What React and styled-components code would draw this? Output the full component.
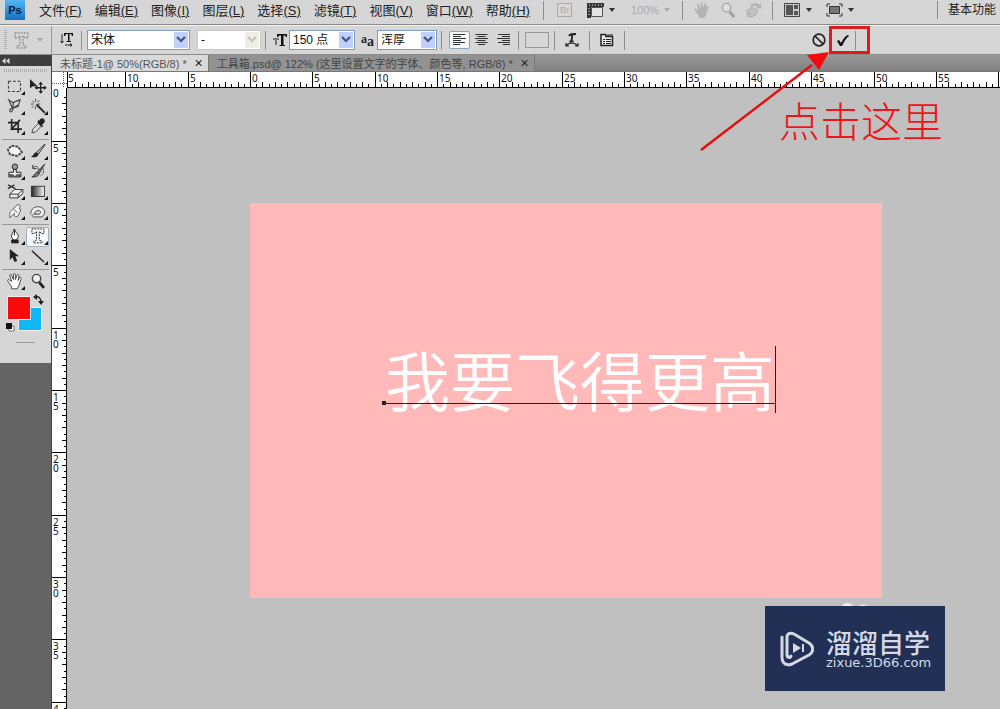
import React, { useEffect, useState } from 'react';
import styled, { createGlobalStyle, css } from 'styled-components';

const MENUS = [
  ['文件', 'F'],
  ['编辑', 'E'],
  ['图像', 'I'],
  ['图层', 'L'],
  ['选择', 'S'],
  ['滤镜', 'T'],
  ['视图', 'V'],
  ['窗口', 'W'],
  ['帮助', 'H'],
];

// pixels for five units of the ruler
const STEP = 62.35;

const ICONS = {
  marquee: <rect x="1.5" y="3.5" width="13" height="11" fill="none" stroke="#222" strokeDasharray="3 2" />,
  move: (
    <>
      <path d="M0 1v10l3-2 5 0z" fill="#222" />
      <path d="M11.5 5v11M6 10.500h11" stroke="#222" strokeWidth="1.400" />
      <path d="M9 7l2.500-3L14 7zM9 14l2.500 3 2.500-3zM8 8l-3 2.500L8 13zM15 8l3 2.500-3 2.500z" fill="#222" />
    </>
  ),
  lasso: <path d="M2 2l4 3 8-3-2 7-6 2-2-4zM6 11c-4 0-3 4-2 4s3-2 2-4M7 5l-1 6 7-4" fill="#ddd" stroke="#444" strokeWidth="1.300" />,
  wand: (
    <>
      <path d="M7 7l9 9" stroke="#222" strokeWidth="2" />
      <path d="M6 1v3M6 9v3M1 6.5h3M8 6.500h3M2.500 3l2 2M10 2.500l-2 2M2 10.500l2-2" stroke="#444" />
    </>
  ),
  crop: <path d="M5 1v11h11M1 5h11v11M4 13l10-11" fill="none" stroke="#222" strokeWidth="1.700" />,
  dropper: (
    <>
      <path d="M2 16l1-4 6-6 3 3-6 6z" fill="#ddd" stroke="#444" />
      <path d="M8 5l5 5 1-1-1-2c4-2 3-5 2-6s-4-1-5 2l-1-1z" fill="#222" />
    </>
  ),
  patch: <path d="M5 3l7 1 4 6-5 4-8-2-2-5z" fill="#f4f4f4" stroke="#444" strokeWidth="2" strokeDasharray="3 1" />,
  brush: (
    <>
      <path d="M16 1L7 10l2 2 7-10z" fill="#bbb" stroke="#333" />
      <path d="M7 10c-3 0-3 4-6 5 4 1 8 0 8-3z" fill="#222" />
    </>
  ),
  stamp: (
    <>
      <circle cx="8.500" cy="4" r="3" fill="#999" stroke="#222" />
      <path d="M7 7h3v3h5v5H2v-5h5z" fill="#eee" stroke="#222" />
      <path d="M2 12h13v3H2z" fill="#555" />
      <path d="M6 12h5l-2.500 2z" fill="#fff" />
    </>
  ),
  history: (
    <>
      <path d="M16 1L8 9l2 2zM8 10c-3 0-3 4-6 5 4 0 7 0 8-4z" fill="#777" stroke="#333" />
      <path d="M3 5c3-2 5-2 6 2M3 2v4h4" fill="none" stroke="#333" />
      <path d="M14 6c1 3 1 6-3 8" fill="none" stroke="#333" strokeDasharray="2 1" />
    </>
  ),
  eraser: (
    <>
      <path d="M3 12l5-5h9l-5 5zM3 12v4h9v-4M12 16l5-5V7" fill="#eee" stroke="#333" />
      <path d="M1 2l8 4M1 6l7-4" stroke="#333" strokeWidth="1.500" fill="none" />
    </>
  ),
  gradient: (
    <>
      <defs>
        <linearGradient id="tool-gradient">
          <stop offset="0" stopColor="#222" />
          <stop offset="1" stopColor="#fff" />
        </linearGradient>
      </defs>
      <rect x="1.500" y="3.500" width="14" height="11" fill="url(#tool-gradient)" stroke="#333" />
    </>
  ),
  smudge: <path d="M3 16c0-4-1-6 3-9l5-5c3-1 4 1 2 4l2 1-3 7c-3 2-5 0-4-3M3 16l5-5M7 7l4 3" fill="#f4f4f4" stroke="#555" />,
  sponge: <path d="M1 12c-1-4 3-8 7-8 5 0 8 3 8 7l-3 4H4c-3-1-1-3 0-3h6c2-1 2-4-1-4-3 0-5 3-3 4" fill="#eee" stroke="#444" />,
  pen: (
    <>
      <path d="M8 1c-1 4-4 6-3 9l2 3h3l2-3c1-3-3-5-4-9z" fill="#fff" stroke="#222" />
      <path d="M8 2v6M5 13h7v3H5z" fill="#222" stroke="#222" />
    </>
  ),
  text: <path d="M2 1h13v5h-3l-1-2h-1v9l3 1v2H4v-2l3-1V4H6L5 6H2z" fill="none" stroke="#222" strokeDasharray="2 1" />,
  path: <path d="M3 1v12l3-3 2 5 3-1-2-5h4z" fill="#222" />,
  line: <path d="M2 3l13 12" stroke="#222" strokeWidth="1.500" />,
  hand: <path d="M5 15L1 9c-1-2 1-3 2-1l2 1-2-6c0-2 2-2 2 0l2 4V2c0-2 2-2 2 0v5l2-5c1-1 2 0 2 1l-1 5 1-3c1-1 3 0 2 2l-2 6-2 4H5z" fill="#fff" stroke="#444" />,
  zoom: (
    <>
      <path d="M10 10l5 6" stroke="#222" strokeWidth="3" />
      <circle cx="7" cy="6" r="4.500" fill="#eee" stroke="#444" strokeWidth="1.500" />
    </>
  ),
};

const TOOL_GROUPS = [
  [
    ['marquee', '矩形选框工具'],
    ['move', '移动工具', true],
    ['lasso', '套索工具'],
    ['wand', '魔棒工具'],
    ['crop', '裁剪工具'],
    ['dropper', '吸管工具'],
  ],
  [
    ['patch', '修补工具'],
    ['brush', '画笔工具'],
    ['stamp', '仿制图章工具'],
    ['history', '历史记录画笔工具'],
    ['eraser', '橡皮擦工具'],
    ['gradient', '渐变工具'],
    ['smudge', '涂抹工具'],
    ['sponge', '海绵工具'],
  ],
  [
    ['pen', '钢笔工具'],
    ['text', '文字工具'],
    ['path', '路径选择工具'],
    ['line', '直线工具'],
  ],
  [
    ['hand', '抓手工具'],
    ['zoom', '缩放工具', true],
  ],
];

const useWindowSize = () => {
  const [size, setSize] = useState([window.innerWidth, window.innerHeight]);

  useEffect(() => {
    const update = () => setSize([window.innerWidth, window.innerHeight]);
    window.addEventListener('resize', update);
    return () => window.removeEventListener('resize', update);
  }, []);

  return size;
};

const getTicks = (zero, start, end) => {
  const ticks = [];
  for (let i = Math.ceil(((start - zero) * 10) / STEP); ; i++) {
    const at = Math.round(zero + (i * STEP) / 10) + 0.5;
    if (at > end) return ticks;
    ticks.push({ i, at, major: i % 10 === 0, label: String(Math.abs(i / 2)) });
  }
};

const Tool = ({ name, label, plain, active, onClick }) => (
  <ToolButton type="button" aria-label={label} $active={active} onClick={onClick}>
    <svg width="20" height="18" viewBox="-2 0 20 18">
      <g transform="scale(0.930)">{ICONS[name]}</g>
      {!plain && <path d="M18 13v4h-4z" fill="#111" />}
    </svg>
  </ToolButton>
);

const HorizontalRuler = () => {
  const [width] = useWindowSize();

  return (
    <TopRuler aria-hidden="true">
      <path d="M0 11.500h15M11.500 0v15" stroke="#555" strokeDasharray="1 1" />
      {getTicks(198, 18, width - 52).map(({ i, at, major, label }) => (
        <g key={i}>
          <path d={`M${at} ${major ? 0 : i % 2 ? 12 : 10}V16`} stroke="#000" />
          {major && at + 16 < width - 52 && (
            <text x={at + 1.5} y="10">
              {label}
            </text>
          )}
        </g>
      ))}
      <text x="16" y="10">5</text>
      <path d="M15.500 0V16M15 15.500H4000" stroke="#000" />
    </TopRuler>
  );
};

const VerticalRuler = () => {
  const [, height] = useWindowSize();

  return (
    <SideRuler aria-hidden="true">
      {getTicks(115, 3, height - 88).map(({ i, at, major, label }) => (
        <g key={i}>
          <path d={`M${major ? 0 : i % 2 ? 12 : 10} ${at}H15`} stroke="#000" />
          {major &&
            label.split('').map((digit, n) => (
              <text key={n} x="1" y={at + 10 + n * 9}>
                {at + 10 + n * 9 < height - 84 ? digit : ''}
              </text>
            ))}
        </g>
      ))}
      <text x="1" y="9">0</text>
      <path d="M14.500 0V4000" stroke="#000" />
    </SideRuler>
  );
};

const Picker = ({ label, options, width, disabled }) => (
  <SelectBox $width={width} $disabled={disabled}>
    <select aria-label={label} disabled={disabled}>
      {options.map((option) => (
        <option key={option}>{option}</option>
      ))}
    </select>
    <SelectArrow $disabled={disabled}>
      <svg width="10" height="8" viewBox="0 0 10 8">
        <path d="M1 1l4 4 4-4" fill="none" stroke="currentColor" strokeWidth="2.200" />
      </svg>
    </SelectArrow>
  </SelectBox>
);

const Caret = ({ muted }) => (
  <svg width="8" height="6" viewBox="0 0 8 6" aria-hidden="true">
    <path d="M1 1h6L4 5z" fill={muted ? '#aaa' : '#333'} />
  </svg>
);

const AlignIcon = ({ align }) => (
  <svg width="14" height="14" viewBox="0 0 14 14">
    {[12, 8, 13, 8, 12, 7].map((w, i) => {
      const x = align === 'left' ? 0 : align === 'right' ? 13 - w : (13 - w) / 2;
      return <path key={i} d={`M${x} ${i * 2 + 1.5}h${w}`} stroke="#333" />;
    })}
  </svg>
);

const MenuBar = () => (
  <Menus>
    <Logo>Ps</Logo>
    <MenuList>
      {MENUS.map(([name, key]) => (
        <MenuItem type="button" key={key}>
          {name}
          <u>({key})</u>
        </MenuItem>
      ))}
    </MenuList>
    <Divider />
    <AppTools>
      <BridgeButton type="button">Br</BridgeButton>
      <PlainButton type="button" aria-label="查看额外内容">
        <svg width="17" height="15" viewBox="0 0 17 15">
          <path d="M0 0h17v4H4v11H0z" fill="#333" />
          <path d="M4.500 4.500h11v9h-11z" fill="#e4e4e4" stroke="#555" />
          <path d="M2 2h14M2 5v9" stroke="#fff" strokeDasharray="1 2" />
        </svg>
        <Caret />
      </PlainButton>
      <PlainButton type="button" disabled>
        100% <Caret muted />
      </PlainButton>
    </AppTools>
    <Divider />
    <ViewTools>
      <FadedButton type="button" aria-label="抓手">
        <svg width="16" height="16" viewBox="0 0 17 17">
          <path
            d="M5 15L1 9c-1-2 1-3 2-1l2 1-2-6c0-2 2-2 2 0l2 4V2c0-2 2-2 2 0v5l2-5c1-1 2 0 2 1l-1 5 1-3c1-1 3 0 2 2l-2 6-2 4H5z"
            fill="#666"
          />
        </svg>
      </FadedButton>
      <FadedButton type="button" aria-label="缩放">
        <svg width="16" height="16" viewBox="0 0 17 17">{ICONS.zoom}</svg>
      </FadedButton>
      <FadedButton type="button" aria-label="旋转视图">
        <svg width="16" height="16" viewBox="0 0 17 17">
          <path d="M4 5c2-4 7-5 10-2l2-2v6h-6l2-2c-3-2-5-1-6 1z" fill="#666" />
          <path d="M1 9l6-3 5 3-2 5-5 2-4-1 4-3-4 1z" fill="#999" stroke="#444" />
        </svg>
      </FadedButton>
    </ViewTools>
    <Divider />
    <ViewTools>
      <PlainButton type="button" aria-label="排列文档">
        <svg width="17" height="14" viewBox="0 0 17 14">
          <path d="M.5.5h15v13H.5z" fill="#ccc" stroke="#444" />
          <path d="M2 2h7v10H2zM10 2h4v4h-4zM10 8h4v4h-4z" fill="#555" />
        </svg>
        <Caret />
      </PlainButton>
      <PlainButton type="button" aria-label="屏幕模式">
        <svg width="17" height="14" viewBox="0 0 17 14">
          <path d="M1 4V1h3M13 1h3v3M16 10v3h-3M4 13H1v-3" fill="none" stroke="#333" />
          <path d="M3.500 3.500h10v7h-10z" fill="#777" stroke="#333" />
        </svg>
        <Caret />
      </PlainButton>
    </ViewTools>
    <Workspace type="button">基本功能</Workspace>
  </Menus>
);

const OptionsBar = () => {
  const [align, setAlign] = useState('left');

  return (
    <Options>
      <Preset type="button" aria-label="工具预设">
        <Grip />
        <svg width="17" height="17" viewBox="0 0 17 17">
          <g opacity="0.500">{ICONS.text}</g>
        </svg>
        <Caret muted />
      </Preset>
      <Orientation type="button" aria-label="更改文本方向">
        <svg width="14" height="14" viewBox="0 0 14 14">
          <path d="M2 1v9M.5 8L2 10l1.500-2M5 12h7M10 10.500l2 1.500-2 1.500" fill="none" stroke="#222" />
          <path d="M4 0h9v3h-1l-1-2H9.500v7H11v1H6.500V8H8V1H6L5 3H4z" fill="#111" />
        </svg>
      </Orientation>
      <Divider />
      <FontFields>
        <Picker label="字体" options={['宋体', '黑体']} width={103} />
        <Picker label="字体样式" options={['-']} width={64} disabled />
      </FontFields>
      <Divider />
      <SizeFields>
        <svg width="14" height="14" viewBox="0 0 14 14" aria-hidden="true">
          <path d="M4 1h10v3h-1l-1-1.500h-1.500V12H12v1H6.500v-1H8V2.500H6.500L5 4H4z" fill="#111" />
          <path d="M0 5h6v2H4v5H2V7H0z" fill="#777" />
        </svg>
        <Picker label="字号" options={['150 点', '72 点']} width={66} />
      </SizeFields>
      <SizeFields>
        <AntiAlias>
          a<sub>a</sub>
        </AntiAlias>
        <Picker label="消除锯齿" options={['浑厚', '锐利', '平滑']} width={60} />
      </SizeFields>
      <Divider />
      <AlignGroup>
        {['left', 'center', 'right'].map((value) => (
          <AlignButton
            type="button"
            key={value}
            aria-label={value}
            $active={align === value}
            onClick={() => setAlign(value)}
          >
            <AlignIcon align={value} />
          </AlignButton>
        ))}
      </AlignGroup>
      <Divider />
      <TextColor type="button" aria-label="文本颜色" />
      <Divider />
      <OptionButton type="button" aria-label="变形文字">
        <svg width="16" height="16" viewBox="0 0 16 16">
          <path d="M5 4c1-2 3-2 7-2M8.500 2L7.500 9M5.500 9.500h4" fill="none" stroke="#222" strokeWidth="1.800" />
          <path d="M2 14c3-4 8-4 12 0M2 11v3h3M11 14h3v-3" fill="none" stroke="#222" strokeWidth="1.200" />
        </svg>
      </OptionButton>
      <Divider />
      <OptionButton type="button" aria-label="字符面板">
        <svg width="14" height="14" viewBox="0 0 14 14">
          <path d="M1 1.500h4l1 2h6.500v9H1z" fill="#eee" stroke="#222" strokeWidth="1.500" />
          <path d="M3 6.500h2M6 6.500h5M3 8.500h2M6 8.500h5M3 10.500h2M6 10.500h5M6 2h7" stroke="#222" />
        </svg>
      </OptionButton>
      <Divider />
      <CommitGroup>
        <CommitButton type="button" aria-label="取消">
          <svg width="14" height="14" viewBox="0 0 14 14">
            <circle cx="7" cy="7" r="5.800" fill="none" stroke="#222" strokeWidth="1.700" />
            <path d="M3 3l8 8" stroke="#222" strokeWidth="1.700" />
          </svg>
        </CommitButton>
        <Highlight>
          <CommitButton type="button" aria-label="提交">
            <svg width="14" height="14" viewBox="0 0 14 14">
              <path d="M1 8l2-1 2 3c2-4 4-7 7-8l1 1c-3 2-5 6-7 10H4z" fill="#111" />
            </svg>
          </CommitButton>
          <Divider />
          <ArrowMark width="130" height="100" viewBox="0 0 130 100" aria-hidden="true">
            <path d="M1 99L112 14" stroke="#e60d0d" strokeWidth="2.500" />
            <path d="M129 1l-10 18-12-15z" fill="#f40b0b" />
          </ArrowMark>
          <Note>点击这里</Note>
        </Highlight>
      </CommitGroup>
    </Options>
  );
};

const Toolbox = () => {
  const [active, setActive] = useState('text');

  return (
    <Side>
      <SideHead>
        <svg width="8" height="6" viewBox="0 0 8 6" aria-hidden="true">
          <path d="M3.500 0v6L0 3zM7.500 0v6L4 3z" fill="#ddd" />
        </svg>
      </SideHead>
      <Tools>
        <TopGrip />
        {TOOL_GROUPS.map((group, i) => (
          <ToolGroup key={i}>
            {group.map(([name, label, plain]) => (
              <Tool
                key={name}
                name={name}
                label={label}
                plain={plain}
                active={active === name}
                onClick={() => setActive(name)}
              />
            ))}
          </ToolGroup>
        ))}
        <Swatches width="40" height="42" viewBox="0 0 40 42" role="img" aria-label="前景色和背景色">
          <path d="M12.500 14.500h23v23h-23z" fill="#10b9f6" stroke="#eee" />
          <path d="M1.500 3.500h23v23h-23z" fill="#fa0a0a" stroke="#eee" />
          <path d="M29 4c4-1 6 1 6 6" fill="none" stroke="#222" strokeWidth="1.300" />
          <path d="M31 1v6l-4-3zM32 8h6l-3 4z" fill="#222" />
          <path d="M3 33h5v5H3z" fill="#fff" stroke="#777" />
          <path d="M0 30h6v6H0z" fill="#111" />
        </Swatches>
        <Handle />
      </Tools>
    </Side>
  );
};

const App = () => (
  <>
    <GlobalStyle />
    <Page>
      <MenuBar />
      <OptionsBar />
      <Body>
        <Toolbox />
        <Main>
          <Tabs>
            <Tab $active>
              未标题-1@ 50%(RGB/8) * <CloseButton type="button" aria-label="关闭">×</CloseButton>
            </Tab>
            <Tab>
              工具箱.psd@ 122% (这里设置文字的字体、颜色等, RGB/8) *{' '}
              <CloseButton type="button" aria-label="关闭">×</CloseButton>
            </Tab>
          </Tabs>
          <HorizontalRuler />
          <Stage>
            <VerticalRuler />
            <Desk>
              <Artboard>
                <TypeLayer>我要飞得更高</TypeLayer>
              </Artboard>
            </Desk>
          </Stage>
        </Main>
      </Body>
      <Watermark>
        <Bumps width="30" height="3" viewBox="0 0 30 3" aria-hidden="true">
          <path d="M1 3c2-4 9-4 11 0zM18 3c2-2 6-2 8 0z" fill="#eee" />
        </Bumps>
        <svg width="34" height="36" viewBox="0 0 34 36" aria-hidden="true">
          <path
            d="M2 6v20c0 7 5 9 10 7l17-9c5-3 5-9 0-12L14 3C10 1 7 3 7 6v18c0 3 4 3 4 1"
            fill="none"
            stroke="#d5d9e6"
            strokeWidth="3"
            strokeLinecap="round"
          />
          <path d="M13 12l8 5-8 5zM22 13h2v8h-2z" fill="#d5d9e6" />
        </svg>
        <Brand>
          <strong>溜溜自学</strong>
          <span>zixue.3D66.com</span>
        </Brand>
      </Watermark>
    </Page>
  </>
);

const GlobalStyle = createGlobalStyle`
  * {
    box-sizing: border-box;
  }

  body {
    margin: 0;
    overflow: hidden;
    font-family: 'Liberation Sans', 'Noto Sans CJK SC', sans-serif;
    font-size: 12px;
    color: #222;
  }

  button,
  select {
    font: inherit;
    color: inherit;
    padding: 0;
    border: 0;
    background: none;
  }

  svg {
    display: block;
    flex: none;
  }
`;

const Page = styled.div`
  position: relative;
  display: flex;
  flex-direction: column;
  height: 100vh;
  background: #c0c0c0;
`;

const Divider = styled.span`
  flex: none;
  width: 1px;
  height: 19px;
  background: #8e8e8e;
`;

const Menus = styled.header`
  display: flex;
  align-items: center;
  flex: none;
  height: 25px;
  padding: 0 4px 4px 5px;
  background: #d6d6d6;
  border-bottom: 1px solid #8b8b8b;
  white-space: nowrap;
`;

const Logo = styled.span`
  width: 20px;
  height: 20px;
  background: linear-gradient(#54b6f2, #1670c4);
  color: #06203c;
  font-weight: bold;
  font-size: 11px;
  line-height: 20px;
  text-align: center;
`;

const MenuList = styled.nav`
  display: flex;
  justify-content: space-between;
  width: 491px;
  margin: 2px 13px 0 14px;
`;

const MenuItem = styled.button`
  font-size: 13px;
  line-height: 20px;
`;

const PlainButton = styled.button`
  display: flex;
  align-items: center;
  gap: 4px;
  font-size: 11px;

  &:disabled {
    color: #aaa;
  }
`;

const FadedButton = styled(PlainButton)`
  opacity: 0.3;
`;

const AppTools = styled.div`
  display: flex;
  align-items: center;
  gap: 15px;
  padding: 0 11px 0 13px;
`;

const BridgeButton = styled.button`
  width: 15px;
  height: 14px;
  border: 1px solid #aaa;
  color: #aaa;
  font-size: 9px;
  line-height: 12px;
`;

const ViewTools = styled.div`
  display: flex;
  align-items: center;
  gap: 10px;
  padding: 0 10px 0 11px;

  &:last-of-type {
    gap: 13px;
  }
`;

const Workspace = styled.button`
  margin-left: auto;
  padding-left: 10px;
  border-left: 1px solid #8e8e8e;
  line-height: 18px;
`;

const Options = styled.section`
  display: flex;
  align-items: center;
  flex: none;
  height: 30px;
  background: #d6d6d6;
  border-top: 1px solid #f2f2f2;
  border-bottom: 1px solid #8b8b8b;
`;

const Preset = styled.button`
  display: flex;
  align-items: center;
  gap: 6px;
  width: 52px;
  height: 28px;
  padding-left: 4px;
  border-right: 1px solid #999;
`;

const Grip = styled.span`
  width: 3px;
  height: 20px;
  background: repeating-linear-gradient(#aaa 0 1px, #ddd 1px 2px);
`;

const Orientation = styled.button`
  padding: 0 7px 0 8px;
`;

const FontFields = styled.div`
  display: flex;
  gap: 7px;
  padding: 0 4px 0 5px;
`;

const SelectBox = styled.span`
  display: flex;
  width: ${({ $width }) => $width}px;
  height: 20px;
  padding: 1px;
  background: #fff;
  border: 1px solid ${({ $disabled }) => ($disabled ? '#c8c8c0' : '#7f9db9')};

  select {
    appearance: none;
    flex: 1;
    min-width: 0;
    padding-left: 2px;
    outline: none;
    opacity: 1;
    color: #111;
  }
`;

const SelectArrow = styled.span`
  display: flex;
  align-items: center;
  justify-content: center;
  width: 14px;
  pointer-events: none;
  background: ${({ $disabled }) => ($disabled ? '#eeede6' : '#bfd0fb')};
  color: ${({ $disabled }) => ($disabled ? '#c5c4b8' : '#42557f')};
`;

const SizeFields = styled.div`
  display: flex;
  align-items: center;
  gap: 2px;
  padding-left: 7px;

  & + & {
    gap: 3px;
    padding: 0 4px 0 6px;
  }
`;

const AntiAlias = styled.span`
  font-family: 'Liberation Serif', serif;
  font-weight: bold;
  font-size: 12px;
  line-height: 16px;

  sub {
    font-size: 14px;
    line-height: 12px;
  }
`;

const AlignGroup = styled.div`
  display: flex;
  gap: 1px;
  padding: 0 4px 0 7px;
`;

const AlignButton = styled.button`
  display: flex;
  align-items: center;
  justify-content: center;
  width: 21px;
  height: 18px;
  border: 1px solid transparent;
  ${({ $active }) =>
    $active &&
    css`
      border-color: #8da4b8;
      border-radius: 2px;
      background: #f5f7f9;
    `}
`;

const TextColor = styled.button`
  width: 24px;
  height: 16px;
  margin: 0 5px 0 6px;
  border: 1px solid #999;
`;

const OptionButton = styled.button`
  display: flex;
  align-items: center;
  justify-content: center;
  width: 34px;
  height: 20px;
`;

const CommitGroup = styled.div`
  display: flex;
  align-items: center;
  margin-left: auto;
  padding-right: 130px;
`;

const CommitButton = styled.button`
  display: flex;
  justify-content: center;
  width: 21px;
`;

const Highlight = styled.div`
  position: relative;
  display: flex;
  align-items: center;
  gap: 2px;
  width: 41px;
  height: 28px;
  border: 3px solid #e01b1f;
`;

const ArrowMark = styled.svg`
  position: absolute;
  top: 22px;
  right: 37px;
`;

const Note = styled.span`
  position: absolute;
  top: 64px;
  left: -53px;
  font-family: 'Noto Sans CJK SC', sans-serif;
  font-weight: 300;
  font-size: 41px;
  line-height: 52px;
  white-space: nowrap;
  color: #ef1418;
`;

const Body = styled.div`
  display: flex;
  flex: 1;
  min-height: 0;
`;

const Side = styled.aside`
  flex: none;
  width: 52px;
  background: #646464;
  border-right: 1px solid #444;
`;

const SideHead = styled.div`
  height: 11px;
  padding: 3px 2px;
  background: #3f3f3f;
`;

const Tools = styled.div`
  display: flex;
  flex-direction: column;
  align-items: center;
  padding: 3px 2px 20px;
  background: #d6d6d6;
`;

const TopGrip = styled.div`
  width: 44px;
  height: 3px;
  margin-bottom: 5px;
  background: repeating-linear-gradient(90deg, #aaa 0 1px, #ddd 1px 2px);
`;

const ToolGroup = styled.div`
  display: grid;
  grid-template-columns: 23px 23px;
  grid-auto-rows: 20px;
  justify-content: center;
  align-self: stretch;

  & + & {
    margin-top: 2px;
    padding-top: 2px;
    border-top: 1px solid #999;
  }
`;

const ToolButton = styled.button`
  display: flex;
  align-items: center;
  justify-content: flex-end;
  border: 1px solid transparent;
  ${({ $active }) =>
    $active &&
    css`
      background: #f5f8fa;
      border-color: #9fb1c0;
      border-radius: 2px;
    `}
`;

const Swatches = styled.svg`
  margin-top: 1px;
`;

const Handle = styled.span`
  width: 19px;
  height: 1px;
  margin-top: 7px;
  background: #999;
`;

const Main = styled.main`
  display: flex;
  flex-direction: column;
  flex: 1;
  min-width: 0;
`;

const Tabs = styled.div`
  display: flex;
  flex: none;
  height: 17px;
  background: linear-gradient(#999, #808080);
  border-bottom: 1px solid #777;
  white-space: nowrap;
`;

const Tab = styled.div`
  display: flex;
  align-items: center;
  gap: 7px;
  padding: 0 4px 0 8px;
  background: ${({ $active }) => ($active ? '#d9d9d9' : '#929292')};
  border-right: 1px solid #777;
  color: ${({ $active }) => ($active ? '#555' : '#444')};
  font-size: 11px;
`;

const CloseButton = styled.button`
  width: 10px;
  color: #222;
  font-size: 14px;
  line-height: 14px;
`;

const rulerText = css`
  display: block;
  flex: none;
  background: #fff;
  shape-rendering: crispEdges;

  text {
    font-family: 'Noto Sans', sans-serif;
    font-size: 10px;
    fill: #111;
  }
`;

const TopRuler = styled.svg`
  ${rulerText}
  width: 100%;
  height: 16px;
`;

const Stage = styled.div`
  display: flex;
  flex: 1;
  min-height: 0;
`;

const SideRuler = styled.svg`
  ${rulerText}
  width: 15px;
  height: 100%;
`;

const Desk = styled.div`
  flex: 1;
  min-width: 0;
  padding: 115px 0 0 183px;
  overflow: hidden;
`;

const Artboard = styled.div`
  display: flex;
  width: 632px;
  height: 395px;
  padding: 143px 0 0 135px;
  background: #ffb9b9;
`;

const TypeLayer = styled.div`
  position: relative;
  height: 67px;
  border-right: 1px solid #222;
  font-family: 'Noto Sans CJK SC', sans-serif;
  font-weight: 350;
  font-size: 65px;
  line-height: 64px;
  white-space: nowrap;
  color: #fff;

  &::before {
    content: '';
    position: absolute;
    top: 57px;
    left: 0;
    right: 0;
    height: 1px;
    background: #222;
  }

  &::after {
    content: '';
    position: absolute;
    top: 55px;
    left: -3px;
    width: 4px;
    height: 4px;
    background: #222;
  }
`;

const Watermark = styled.div`
  position: absolute;
  right: 55px;
  bottom: 18px;
  display: flex;
  align-items: center;
  gap: 12px;
  width: 180px;
  height: 85px;
  padding-left: 15px;
  background: #223056;
  color: #d5d9e6;
`;

const Bumps = styled.svg`
  position: absolute;
  top: -3px;
  left: 76px;
`;

const Brand = styled.div`
  display: flex;
  flex-direction: column;

  strong {
    font-family: 'Noto Sans CJK SC', sans-serif;
    font-weight: 500;
    font-size: 26px;
    line-height: 28px;
  }

  span {
    font-family: 'DejaVu Sans', sans-serif;
    font-size: 13px;
    line-height: 14px;
  }
`;

export default App;
